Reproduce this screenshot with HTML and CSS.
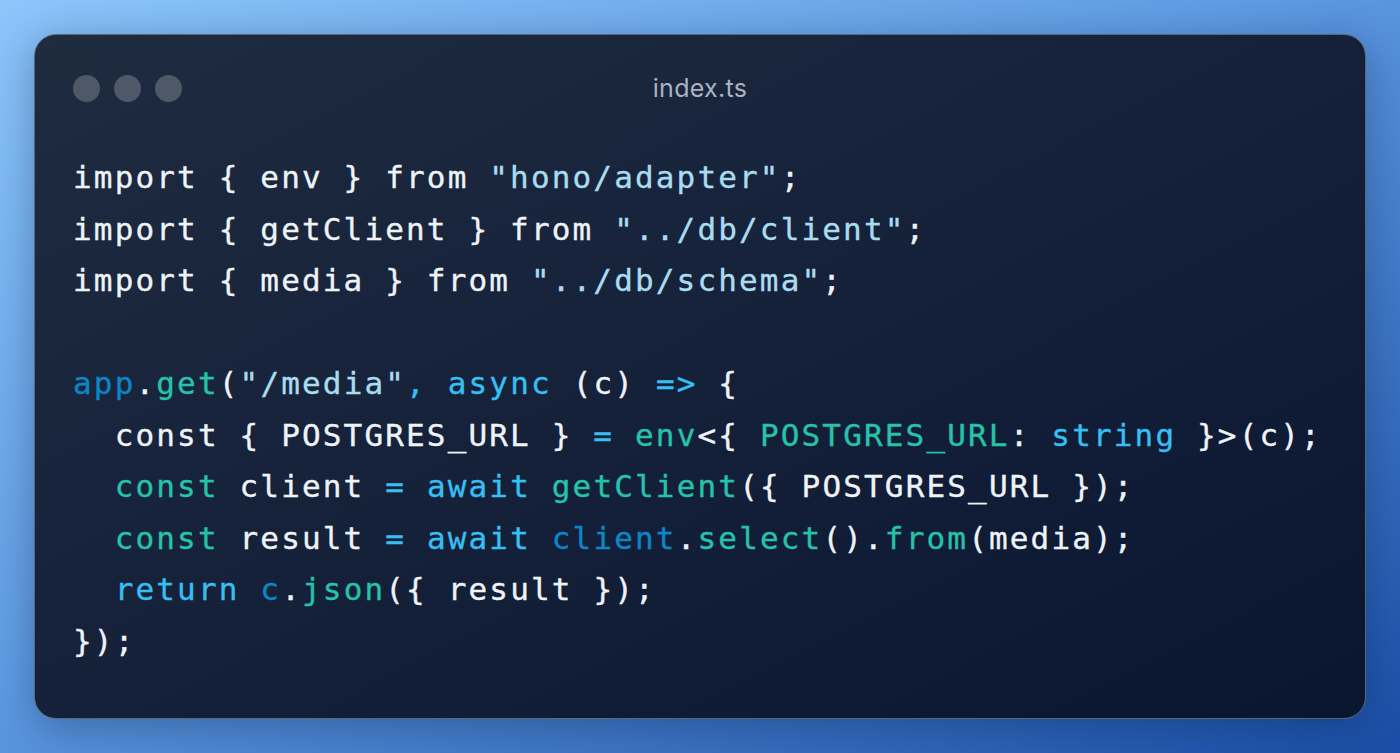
FILE: index.html
```html
<!DOCTYPE html>
<html lang="en">
<head>
<meta charset="utf-8">
<title>index.ts</title>
<link rel="stylesheet" href="styles.css">
</head>
<body>
<div class="window">
  <div class="titlebar">
    <div class="dots"><span class="dot"></span><span class="dot"></span><span class="dot"></span></div>
    <div class="title">index.ts</div>
    <div class="spacer"></div>
  </div>
<pre class="code"><code><span class="tx">import { env } from </span><span class="st">"hono/adapter"</span><span class="tx">;</span>
<span class="tx">import { getClient } from </span><span class="st">"../db/client"</span><span class="tx">;</span>
<span class="tx">import { media } from </span><span class="st">"../db/schema"</span><span class="tx">;</span>

<span class="db">app</span><span class="tx">.</span><span class="te">get</span><span class="tx">(</span><span class="st">"/media"</span><span class="cy">,</span> <span class="cy">async</span><span class="tx"> (c) </span><span class="cy">=&gt;</span><span class="tx"> {</span>
<span class="tx">  const { POSTGRES_URL } </span><span class="cy">=</span> <span class="te">env</span><span class="tx">&lt;{ </span><span class="te">POSTGRES_URL</span><span class="tx">: </span><span class="cy">string</span><span class="tx"> }&gt;(c);</span>
  <span class="te">const</span><span class="tx"> client </span><span class="cy">=</span> <span class="cy">await</span> <span class="te">getClient</span><span class="tx">({ POSTGRES_URL });</span>
  <span class="te">const</span><span class="tx"> result </span><span class="cy">=</span> <span class="cy">await</span> <span class="db">client</span><span class="tx">.</span><span class="te">select</span><span class="tx">().</span><span class="te">from</span><span class="tx">(media);</span>
  <span class="cy">return</span> <span class="db">c</span><span class="tx">.</span><span class="te">json</span><span class="tx">({ result });</span>
<span class="tx">});</span></code></pre>
</div>
</body>
</html>
```
FILE: styles.css
```css
html, body {
  margin: 0;
  padding: 0;
  height: 100%;
}

body {
  width: 1400px;
  height: 753px;
  overflow: hidden;
  background: linear-gradient(to bottom right, #8cc6fb 0%, #5f9be2 45%, #1a4ea6 100%);
  box-sizing: border-box;
  padding: 34px;
}

.window {
  box-sizing: border-box;
  width: 1332px;
  height: 685px;
  border: 1.5px solid #5d6677;
  border-radius: 22px;
  background: linear-gradient(to bottom right, #1f2b3f 0%, #16223a 45%, #0a1630 100%);
  box-shadow: 0 8px 40px rgba(10, 30, 70, 0.35);
  padding: 38px 38px 0 38px;
}

.titlebar {
  display: grid;
  grid-template-columns: 1fr auto 1fr;
  align-items: center;
  height: 29px;
}

.dots {
  display: flex;
  gap: 14px;
}

.dot {
  width: 27px;
  height: 27px;
  border-radius: 50%;
  background: #4f5868;
}

.title {
  font-family: Inter, "Noto Sans", sans-serif;
  font-size: 25px;
  color: #a9b3c2;
  letter-spacing: 0.3px;
}

.code {
  margin: 50px 0 0 0;
  font-family: "DejaVu Sans Mono", "Liberation Mono", monospace;
  font-size: 31px;
  letter-spacing: 2.15px;
  line-height: 51.5px;
  color: #eef3f8;
  white-space: pre;
  -webkit-text-stroke: 0.35px currentColor;
}

.code code {
  font-family: inherit;
}

.tx { color: #eef3f8; }
.st { color: #aadcf0; }
.te { color: #27c2aa; }
.cy { color: #38bff2; }
.db { color: #0c86c6; }
```
